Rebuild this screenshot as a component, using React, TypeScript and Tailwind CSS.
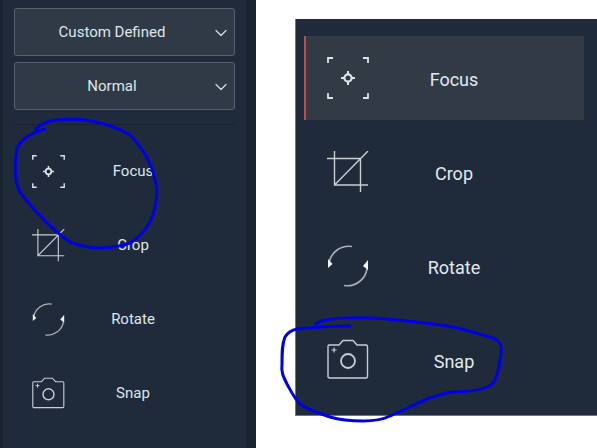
import { ChevronDown } from 'lucide-react'

type IconProps = { className: string }

function FocusIcon({ className }: IconProps) {
  return (
    <svg viewBox="0 0 42 42" fill="none" stroke="#dfe3e8" strokeWidth="1.8" className={className}>
      <path d="M1 6V1h5M36 1h5v5M1 36v5h5M41 36v5h-5" />
      <circle cx="21" cy="21" r="3.6" strokeWidth="2.200" />
      <path d="M21 14v3.4M21 24.6V28M14 21h3.4M24.6 21H28" strokeWidth="2" />
    </svg>
  )
}

function CropIcon({ className }: IconProps) {
  return (
    <svg viewBox="0 0 42 42" fill="none" stroke="#c9ced5" strokeWidth="1.4" className={className}>
      <path d="M0 7.500h33.500V41M7.500 0v34H41M7.500 34 41 0" />
    </svg>
  )
}

function RotateIcon({ className }: IconProps) {
  return (
    <svg viewBox="0 0 42 42" fill="none" stroke="#aab1b9" strokeWidth="1.6" className={className}>
      <path d="M2 18A20 20 0 0 1 25 1.500" />
      <path d="M40 24A20 20 0 0 1 17 40.500" />
      <path d="M1 14v9l4.500-4z" fill="#f2f4f6" stroke="none" />
      <path d="M41 15v10l-5-4z" fill="#f2f4f6" stroke="none" />
    </svg>
  )
}

function SnapIcon({ className }: IconProps) {
  return (
    <svg viewBox="0 0 42 42" fill="none" stroke="#c9ced5" strokeWidth="1.4" className={className}>
      <path d="M2 6h10l4-4.500h10L30 6h9a1.500 1.500 0 0 1 1.500 1.500v30A1.500 1.500 0 0 1 39 39H2.500A1.500 1.500 0 0 1 1 37.500v-30A1.500 1.500 0 0 1 2 6z" />
      <circle cx="21" cy="22" r="7" strokeWidth="1.800" />
      <path d="M7 8.500v5M4.500 11h5" strokeWidth="1.200" />
    </svg>
  )
}

const tools = [
  { label: 'Focus', Icon: FocusIcon },
  { label: 'Crop', Icon: CropIcon },
  { label: 'Rotate', Icon: RotateIcon },
  { label: 'Snap', Icon: SnapIcon },
]

function Dropdown({ label }: { label: string }) {
  return (
    <div className="relative flex h-[48px] items-center justify-center rounded-[3px] border-[1.5px] border-[#566270] bg-[#2f3a46] pr-[25px] pt-[1px] text-[15px] text-[#dfe6ec]">
      {label}
      <ChevronDown className="absolute right-[3px] h-[20px] w-[20px] text-[#d5dae0]" strokeWidth={1.5} />
    </div>
  )
}

export default function App() {
  return (
    <div className="relative flex h-[448px] w-[597px] overflow-hidden bg-white font-['Roboto',sans-serif]">
      <div className="flex h-full w-[256px] shrink-0 bg-[#1a2431]">
        <div className="ml-[3px] flex h-full w-[243px] flex-col bg-[#1f2b3a] px-[11px] pt-[8px]">
          <div className="flex flex-col gap-[6px]">
            <Dropdown label="Custom Defined" />
            <Dropdown label="Normal" />
          </div>
          <div className="mt-[14px] h-px bg-[#182230]" />
          <div className="mt-[9px] flex flex-col">
            {tools.map(({ label, Icon }) => (
              <div key={label} className="flex h-[74px] items-center">
                <Icon className="ml-[18px] h-[33px] w-[33px]" />
                <span className="w-[131px] pl-[5px] text-center text-[15px] text-[#dfe6ec]">{label}</span>
              </div>
            ))}
          </div>
        </div>
      </div>

      <div className="ml-[39px] mt-[19px] h-[397px] flex-1 border-b border-l border-[#6d7782] bg-[#1f2b3a] pl-[8px] pt-[17px]">
        {tools.map(({ label, Icon }, i) => (
          <div
            key={label}
            className={
              i === 0
                ? 'mb-[10px] flex h-[84px] w-[280px] items-center border-l-2 border-[#c8493f] bg-[#323b45]'
                : 'mb-[10px] flex h-[84px] w-[280px] items-center border-l-2 border-transparent'
            }
          >
            <Icon className="ml-[21px] h-[42px] w-[42px]" />
            <span className="w-[170px] pt-[2px] text-center text-[18px] text-[#e3e9ee]">{label}</span>
          </div>
        ))}
      </div>

      {/* hand drawn marker circles */}
      <svg viewBox="0 0 597 448" fill="none" stroke="#0000e6" strokeWidth="3" strokeLinecap="round" strokeLinejoin="round" className="pointer-events-none absolute inset-0 h-full w-full">
        <path d="M36 129C42 122 50 120 72 119C95 120 115 126 130 135C145 150 155 170 157 192C156 215 148 232 130 243C112 249 90 250 70 242C55 232 35 212 22 195C14 185 14 165 17 148C22 138 34 132 45 129" />
        <path d="M316 324C320 320 335 318 347 318C365 317 380 318 397 320C415 322 430 323 447 326C465 329 480 334 493 338C500 341 502 345 501 352C500 362 499 368 497 374C495 382 492 386 487 387C478 391 465 392 453 392C443 393 435 396 427 399C415 404 402 411 390 416C382 420 372 421 363 421C350 421 340 420 330 417C318 413 308 410 300 404C294 398 291 391 287 384C283 376 281 372 282 364C282 352 282 344 285 337C288 332 292 330 297 329C315 327 333 326 350 326" />
      </svg>
    </div>
  )
}
